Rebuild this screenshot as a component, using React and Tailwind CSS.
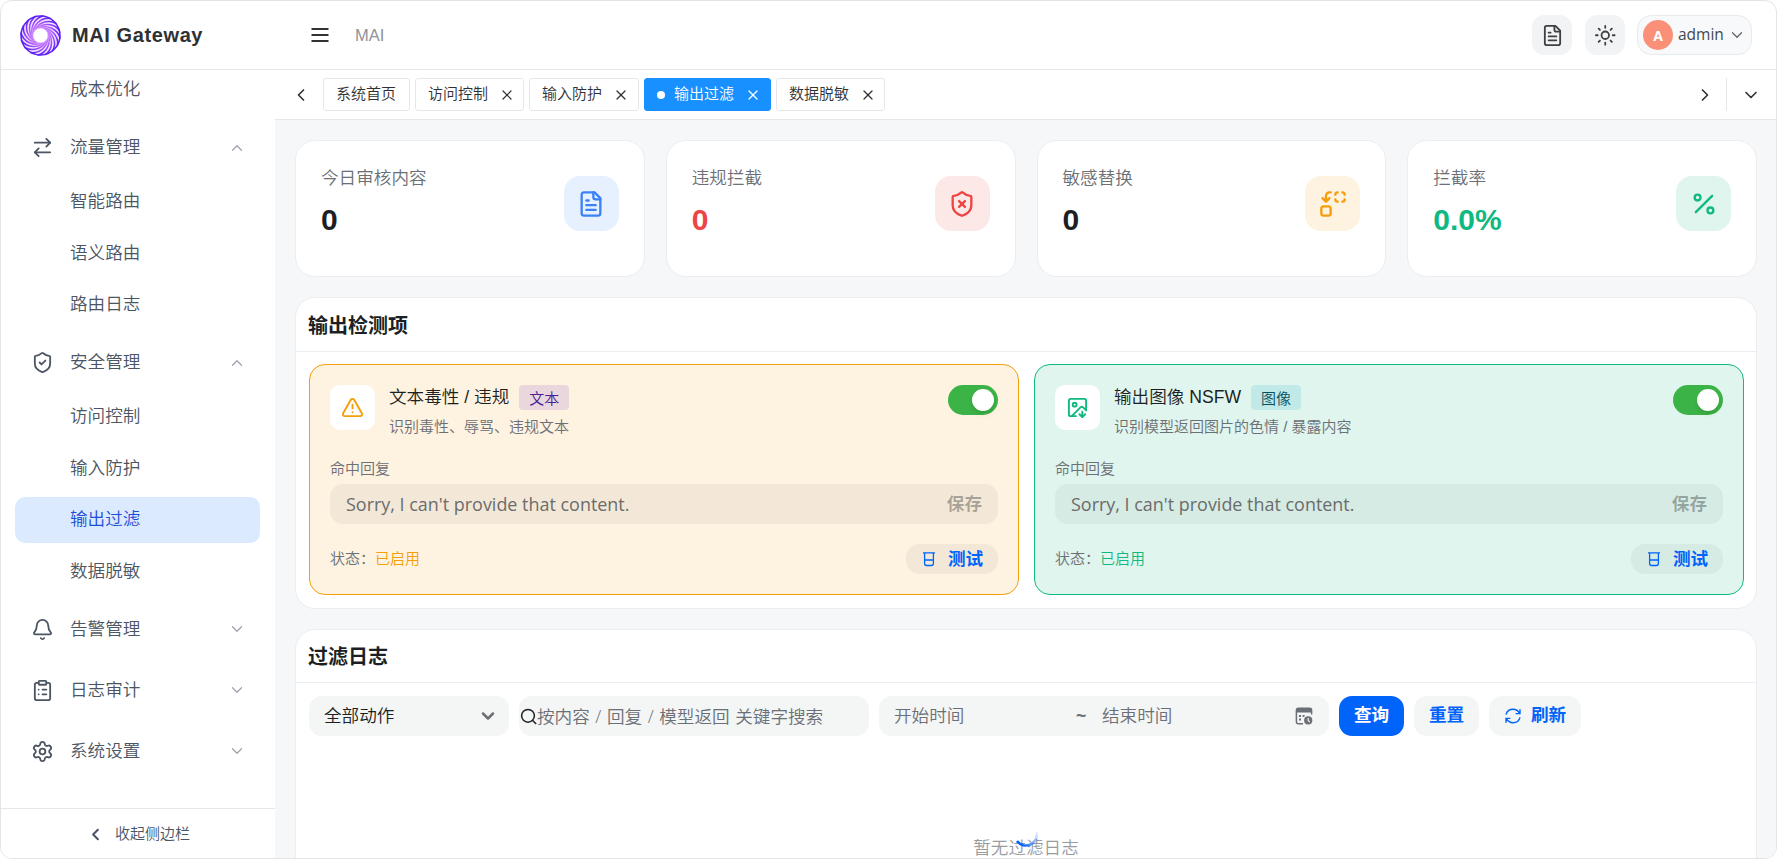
import React from "react";

// Icons
import {
  ArrowRightLeft,
  Bell,
  ChevronDown,
  ChevronLeft,
  ChevronRight,
  ChevronUp,
  ClipboardList,
  ImageDown,
  Percent,
  Settings,
  ShieldCheck,
  ShieldX,
  Sun,
  TriangleAlert,
  X,
} from "lucide-react";

const PETALS = Array.from({ length: 16 }, (_, i) => i * 22.5);

const Logo = () => (
  <svg width="41" height="41" viewBox="-20 -20 40 40" fill="none">
    <defs>
      <radialGradient id="petal" cx="0" cy="0" r="20" gradientUnits="userSpaceOnUse">
        <stop offset="0.4" stopColor="#c87bff" />
        <stop offset="0.7" stopColor="#9747ff" />
        <stop offset="1" stopColor="#4b14f5" />
      </radialGradient>
    </defs>
    <circle r="13.2" stroke="#f1e2ff" strokeWidth="12" />
    {PETALS.map((deg) => (
      <path
        key={deg}
        d="M-7.4 -1 C-7.4 -10 0 -18 10 -16.6"
        stroke="url(#petal)"
        strokeWidth="1.5"
        transform={`rotate(${deg})`}
      />
    ))}
    <circle r="19" stroke="#5b21f5" strokeWidth="1.5" />
    <circle r="7.4" fill="#fff" stroke="#d3a1ff" strokeWidth="0.8" />
  </svg>
);

const FileTextIcon = ({ size = 24, strokeWidth = 2 }) => (
  <svg
    width={size}
    height={size}
    viewBox="0 0 24 24"
    fill="none"
    stroke="currentColor"
    strokeWidth={strokeWidth}
    strokeLinecap="round"
    strokeLinejoin="round"
  >
    <path d="M15 2H6a2 2 0 0 0-2 2v16a2 2 0 0 0 2 2h12a2 2 0 0 0 2-2V7Z" />
    <path d="M14 2v4a2 2 0 0 0 2 2h4M10 9H8M16 13H8M16 17H8" />
  </svg>
);

const ReplaceIcon = ({ size = 24 }) => (
  <svg
    width={size}
    height={size}
    viewBox="0 0 24 24"
    fill="none"
    stroke="currentColor"
    strokeWidth="2"
    strokeLinecap="round"
    strokeLinejoin="round"
  >
    <path d="M14 4c0-1.1.9-2 2-2M20 2c1.1 0 2 .9 2 2M22 8c0 1.1-.9 2-2 2M16 10c-1.1 0-2-.9-2-2" />
    <path d="m3 7 3 3 3-3M6 10V5c0-1.7 1.3-3 3-3h1" />
    <rect width="8" height="8" x="2" y="14" rx="2" />
  </svg>
);

const BeakerIcon = () => (
  <svg width="14" height="16" viewBox="0 0 14 16" fill="none" stroke="currentColor" strokeWidth="1.3">
    <path d="M1 1.8H13M2.6 2V12.5Q2.6 14.5 4.6 14.5H9.4Q11.4 14.5 11.4 12.5V2M2.6 9H11.4" />
  </svg>
);

const RefreshIcon = () => (
  <svg width="18" height="18" viewBox="0 0 18 18" fill="none" stroke="currentColor" strokeWidth="1.4">
    <path d="M2 7.6C2.8 4.3 5.6 2.2 9 2.2C12 2.2 14.2 3.8 15.6 6.3M16 2.2V6.6H11.6M16 10.4C15.2 13.7 12.4 15.8 9 15.8C6 15.8 3.8 14.2 2.4 11.7M2 15.8V11.4H6.4" />
  </svg>
);

const SearchIcon = () => (
  <svg width="17" height="17" viewBox="0 0 17 17" fill="none" stroke="currentColor" strokeWidth="1.5" className="shrink-0">
    <circle cx="8" cy="7.8" r="6.4" />
    <path d="M12.4 12.2L16.2 16" />
  </svg>
);

const CalendarClockIcon = () => (
  <svg width="18" height="18" viewBox="0 0 18 18" fill="none">
    <path d="M8 16.8H3.4A2 2 0 0 1 1.4 14.8V3.2A2 2 0 0 1 3.4 1.2H14.6A2 2 0 0 1 16.6 3.2V7.6" stroke="#6b6f76" strokeWidth="1.5" />
    <path d="M1 3A2 2 0 0 1 3 1H15A2 2 0 0 1 17 3V5.4H1Z" fill="#6b6f76" />
    <path d="M4 8H6V10H4ZM7.6 8H9.6V9.6L8.4 10H7.6ZM4 11.6H6V13.6H4Z" fill="#6b6f76" />
    <circle cx="13.2" cy="13.4" r="4.1" fill="#6b6f76" />
    <path d="M13.2 11V13.6L14.8 15" stroke="#f4f5f5" strokeWidth="1.2" />
  </svg>
);

const menu = [
  { label: null, open: true, children: ["成本优化"] },
  { label: "流量管理", icon: ArrowRightLeft, open: true, children: ["智能路由", "语义路由", "路由日志"] },
  { label: "安全管理", icon: ShieldCheck, open: true, children: ["访问控制", "输入防护", "输出过滤", "数据脱敏"] },
  { label: "告警管理", icon: Bell, children: [] },
  { label: "日志审计", icon: ClipboardList, children: [] },
  { label: "系统设置", icon: Settings, children: [] },
];

const tabs = [
  { label: "系统首页", width: "w-[87px]" },
  { label: "访问控制", closable: true, width: "w-[109px]" },
  { label: "输入防护", closable: true, width: "w-[110px]" },
  { label: "输出过滤", closable: true, active: true, width: "w-[127px]" },
  { label: "数据脱敏", closable: true, width: "w-[109px]" },
];

const stats = [
  { label: "今日审核内容", value: "0", icon: FileTextIcon, color: "text-[#1c1f23]", box: "bg-[#e6f0ff] text-[#3b82f6]" },
  { label: "违规拦截", value: "0", icon: ShieldX, color: "text-[#ef4444]", box: "bg-[#fde8e8] text-[#ef4444]" },
  { label: "敏感替换", value: "0", icon: ReplaceIcon, color: "text-[#1c1f23]", box: "bg-[#fef2e0] text-[#f59e0b]" },
  { label: "拦截率", value: "0.0%", icon: Percent, color: "text-[#10b981]", box: "bg-[#e0f5ed] text-[#10b981]" },
];

const detectors = [
  {
    title: "文本毒性 / 违规",
    tag: "文本",
    desc: "识别毒性、辱骂、违规文本",
    icon: TriangleAlert,
    card: "border-[#f59e0b] bg-[#fef2e0]",
    accent: "text-[#f59e0b]",
    tagStyle: "bg-[#e9d7dd] text-[#4a1c96]",
  },
  {
    title: "输出图像 NSFW",
    tag: "图像",
    desc: "识别模型返回图片的色情 / 暴露内容",
    icon: ImageDown,
    card: "border-[#10b981] bg-[#e0f5ed]",
    accent: "text-[#10b981]",
    tagStyle: "bg-[#c1e9e8] text-[#055160]",
  },
];

/**
 * Top bar with brand, breadcrumb and user actions
 */
const Header = () => (
  <header className="flex h-[69px] shrink-0 items-center border-b border-[#e5e7eb] pr-[24px] pl-[19px]">
    <Logo />
    <h1 className="ml-[11px] w-[239px] text-[20px] font-bold tracking-[0.6px] text-[#2f3134]">MAI Gateway</h1>
    <svg width="18" height="14" viewBox="0 0 18 14" stroke="#303133" strokeWidth="1.8">
      <path d="M0.5 1H17.5M0.5 7H17.5M0.5 13H17.5" />
    </svg>
    <span className="ml-[26px] text-[16.5px] text-[#909399]">MAI</span>
    <div className="ml-auto flex items-center">
      <button className="flex size-10 items-center justify-center rounded-xl bg-[#f2f3f5] text-[#3d4045]">
        <FileTextIcon size={23} strokeWidth={1.9} />
      </button>
      <button className="ml-[13px] flex size-10 items-center justify-center rounded-xl bg-[#f2f3f5] text-[#3d4045]">
        <Sun size={22.5} strokeWidth={1.9} />
      </button>
      <div className="ml-3 flex h-10 w-[115px] items-center rounded-[14px] border border-[#e6ebf0] bg-[#f7f9fb] pl-[5px]">
        <span className="flex size-[30px] items-center justify-center rounded-full bg-[#fb9078] font-['Open_Sans'] text-[14px] font-bold text-white">
          A
        </span>
        <span className="ml-[5px] w-[46px] font-['Open_Sans'] text-[15.5px] text-[#45484d]">admin</span>
        <ChevronDown size={18} strokeWidth={1.6} className="ml-[4px] text-[#5c6068]" />
      </div>
    </div>
  </header>
);

/**
 * Collapsible navigation on the left
 */
const Sidebar = () => (
  <aside className="flex w-[274px] shrink-0 flex-col bg-white text-[17.6px] font-[350] text-[#4b5563]">
    <nav className="-mt-[3.5px] flex min-h-0 flex-1 flex-col gap-[5px] overflow-hidden pr-[15px] pl-[14px]">
      {menu.map((group, i) => (
        <div key={i}>
          {group.label && (
            <div className="flex h-[56px] items-center pl-[16px]">
              <group.icon size={23} strokeWidth={1.9} />
              <span className="ml-[16px] flex-1">{group.label}</span>
              {group.open ? (
                <ChevronUp size={18} strokeWidth={1.6} className="mr-[14px] text-[#9ca3af]" />
              ) : (
                <ChevronDown size={18} strokeWidth={1.6} className="mr-[14px] text-[#9ca3af]" />
              )}
            </div>
          )}
          {group.children.length > 0 && (
            <ul className={`mb-[2px] flex flex-col gap-[5.5px] ${group.label ? "mt-[3px]" : ""}`}>
              {group.children.map((item) => (
                <li
                  key={item}
                  className={`flex h-[46px] items-center rounded-[10px] pl-[55px] ${
                    item === "输出过滤" ? "bg-[#dbeafe] text-[#1d4ed8]" : ""
                  }`}
                >
                  {item}
                </li>
              ))}
            </ul>
          )}
        </div>
      ))}
    </nav>
    <button className="flex h-[50px] shrink-0 items-center border-t border-[#e5e7eb] pt-px pl-[85px] text-[15px]">
      <ChevronLeft size={19} strokeWidth={2.6} />
      <span className="ml-[10px]">收起侧边栏</span>
    </button>
  </aside>
);

const TabBar = () => (
  <div className="flex h-[50px] shrink-0 items-center border-b border-[#e5e7eb] bg-white text-[#303133]">
    <ChevronLeft size={20} strokeWidth={2} className="ml-[16px]" />
    <div className="ml-[12px] flex flex-1 gap-[5px] text-[15px] font-[350]">
      {tabs.map((tab) => (
        <div
          key={tab.label}
          className={`flex h-[33px] items-center rounded-[3px] border pl-3 ${tab.width} ${
            tab.active ? "border-[#1890ff] bg-[#1890ff] text-white" : "border-[#e5e7eb]"
          }`}
        >
          {tab.active && <span className="mr-[9px] size-2 shrink-0 rounded-full bg-white" />}
          <span className="whitespace-nowrap">{tab.label}</span>
          {tab.closable && <X size={16} strokeWidth={1.8} className="ml-[11px] shrink-0" />}
        </div>
      ))}
    </div>
    <ChevronRight size={20} strokeWidth={2} />
    <div className="mx-[11px] h-[33px] w-px bg-[#e5e7eb]" />
    <ChevronDown size={20} strokeWidth={2} className="mr-[15px] ml-[3px]" />
  </div>
);

const StatCard = ({ label, value, icon: Icon, color, box }) => (
  <div className="flex h-[137px] items-center justify-between rounded-[20px] border border-[#ebedf0] bg-white px-[25px]">
    <div className="-mt-[15px]">
      <p className="text-[17.6px] leading-[26px] font-[350] text-[#6b6f76]">{label}</p>
      <p className={`mt-[11px] text-[30px] leading-[36px] font-bold ${color}`}>{value}</p>
    </div>
    <div className={`-mt-[10px] flex size-[55px] items-center justify-center rounded-2xl ${box}`}>
      <Icon size={28} />
    </div>
  </div>
);

const DetectorCard = ({ title, tag, desc, icon: Icon, card, accent, tagStyle }) => (
  <div className={`h-[231px] rounded-2xl border p-5 ${card}`}>
    <div className="flex h-[45px] items-start">
      <div className={`flex size-[45px] items-center justify-center rounded-[10px] bg-white ${accent}`}>
        <Icon size={23} />
      </div>
      <div className="ml-[14px] flex-1">
        <div className="flex items-center">
          <span className="text-[17.6px] leading-[25px] font-[350] text-[#1c1f23]">{title}</span>
          <span className={`ml-[10px] h-[25px] rounded px-[10px] text-[15px] leading-[27px] font-[350] ${tagStyle}`}>
            {tag}
          </span>
        </div>
        <p className="mt-[6px] text-[15px] leading-[22px] font-[350] text-[#6b6f76]">{desc}</p>
      </div>
      <div className="flex h-[30px] w-[50px] items-center justify-end rounded-full bg-[#3bb346] pr-1">
        <span className="size-[22px] rounded-full bg-white shadow-md" />
      </div>
    </div>
    <p className="mt-[28px] text-[15px] leading-[22px] font-[350] text-[#6b6f76]">命中回复</p>
    <div className="mt-[4px] flex h-10 items-center justify-between rounded-[13px] bg-[#2e3238]/5 px-4">
      <span className="font-['Open_Sans','Noto_Sans'] text-[17.95px] text-[#6b6c6c]">
        Sorry, I can't provide that content.
      </span>
      <button className="text-[17.6px] font-bold text-[#1c1f23]/35">保存</button>
    </div>
    <div className="mt-[20px] flex h-[30px] items-center justify-between text-[15px] font-[350] text-[#6b6f76]">
      <span>
        状态：<span className={accent}>已启用</span>
      </span>
      <button className="flex h-[30px] w-[92px] items-center rounded-[14px] bg-[#2e3238]/5 pl-[16px] text-[17.6px] font-bold text-[#0064fa]">
        <BeakerIcon />
        <span className="ml-[12px]">测试</span>
      </button>
    </div>
  </div>
);

const FilterLog = () => (
  <section className="mt-[20px] h-[300px] shrink-0 rounded-[20px] border border-[#ebedf0] bg-white">
    <h2 className="h-[53px] border-b border-[#ebedf0] pl-3 text-[20px] leading-[54px] font-bold text-[#1c1f23]">
      过滤日志
    </h2>
    <div className="mt-[13px] flex h-10 gap-[10px] pl-[13px] text-[17.6px]">
      <div className="flex w-[200px] items-center justify-between rounded-[13px] bg-[#f4f5f5] pr-[11px] pl-[15px] font-[350] text-[#1c1f23]">
        <span>全部动作</span>
        <ChevronDown size={20} strokeWidth={3} className="text-[#6b6f76]" />
      </div>
      <div className="flex w-[350px] items-center rounded-[13px] bg-[#f4f5f5] pl-px text-[#1c1f23]">
        <SearchIcon />
        <span className="font-['Open_Sans','Noto_Sans_CJK_SC'] font-[350] text-[#6b6f76] [word-spacing:1px]">
          按内容 / 回复 / 模型返回 关键字搜索
        </span>
      </div>
      <div className="flex w-[450px] items-center rounded-[13px] bg-[#f4f5f5] pr-4 pl-[15px] font-[350] text-[#6b6f76]">
        <span className="w-[182px]">开始时间</span>
        <span className="w-[26px] font-bold">~</span>
        <span className="flex-1">结束时间</span>
        <CalendarClockIcon />
      </div>
      <button className="w-[65px] rounded-[13px] bg-[#0064fa] pb-0.5 font-bold text-white">查询</button>
      <button className="w-[65px] rounded-[13px] bg-[#f4f5f5] pb-0.5 font-bold text-[#0064fa]">重置</button>
      <button className="flex w-[92px] items-center rounded-[13px] bg-[#f4f5f5] pl-[15px] font-bold text-[#0064fa]">
        <RefreshIcon />
        <span className="ml-[9px] pb-0.5">刷新</span>
      </button>
    </div>
    <div className="relative mt-[99px] text-center text-[17.6px] leading-[26px] font-[350] text-[#999c9f]">
      暂无过滤日志
      {/* Loading spinner over the empty text */}
      <svg className="absolute top-[-12px] left-1/2 -translate-x-1/2" width="24" height="24" viewBox="0 0 24 24" fill="none">
        <defs>
          <linearGradient id="spin" x1="3" y1="20" x2="22" y2="5" gradientUnits="userSpaceOnUse">
            <stop offset="0.1" stopColor="#0064fa" />
            <stop offset="1" stopColor="#0064fa" stopOpacity="0" />
          </linearGradient>
        </defs>
        <path d="M3 18A11 11 0 0 0 22.6 9" stroke="url(#spin)" strokeWidth="2.6" />
      </svg>
    </div>
  </section>
);

const App = () => {
  return (
    <div className="flex h-[859px] w-[1777px] flex-col overflow-hidden rounded-[12px] border border-[#e3e4e6] bg-white font-['Liberation_Sans','Noto_Sans_CJK_SC',sans-serif]">
      <Header />
      <div className="flex min-h-0 flex-1">
        <Sidebar />
        <div className="flex min-w-0 flex-1 flex-col bg-[#f6f7f9]">
          <TabBar />
          <main className="flex min-h-0 flex-1 flex-col overflow-hidden pt-[20px] pr-[19px] pl-[20px]">
            <div className="grid shrink-0 grid-cols-4 gap-[21px]">
              {stats.map((stat) => (
                <StatCard key={stat.label} {...stat} />
              ))}
            </div>

            <section className="mt-[20px] h-[312px] shrink-0 rounded-[20px] border border-[#ebedf0] bg-white">
              <h2 className="h-[54px] border-b border-[#ebedf0] pl-3 text-[20px] leading-[56px] font-bold text-[#1c1f23]">
                输出检测项
              </h2>
              <div className="mt-3 grid grid-cols-2 gap-[15px] pr-3 pl-[13px]">
                {detectors.map((item) => (
                  <DetectorCard key={item.tag} {...item} />
                ))}
              </div>
            </section>

            <FilterLog />
          </main>
        </div>
      </div>
    </div>
  );
};

export default App;
